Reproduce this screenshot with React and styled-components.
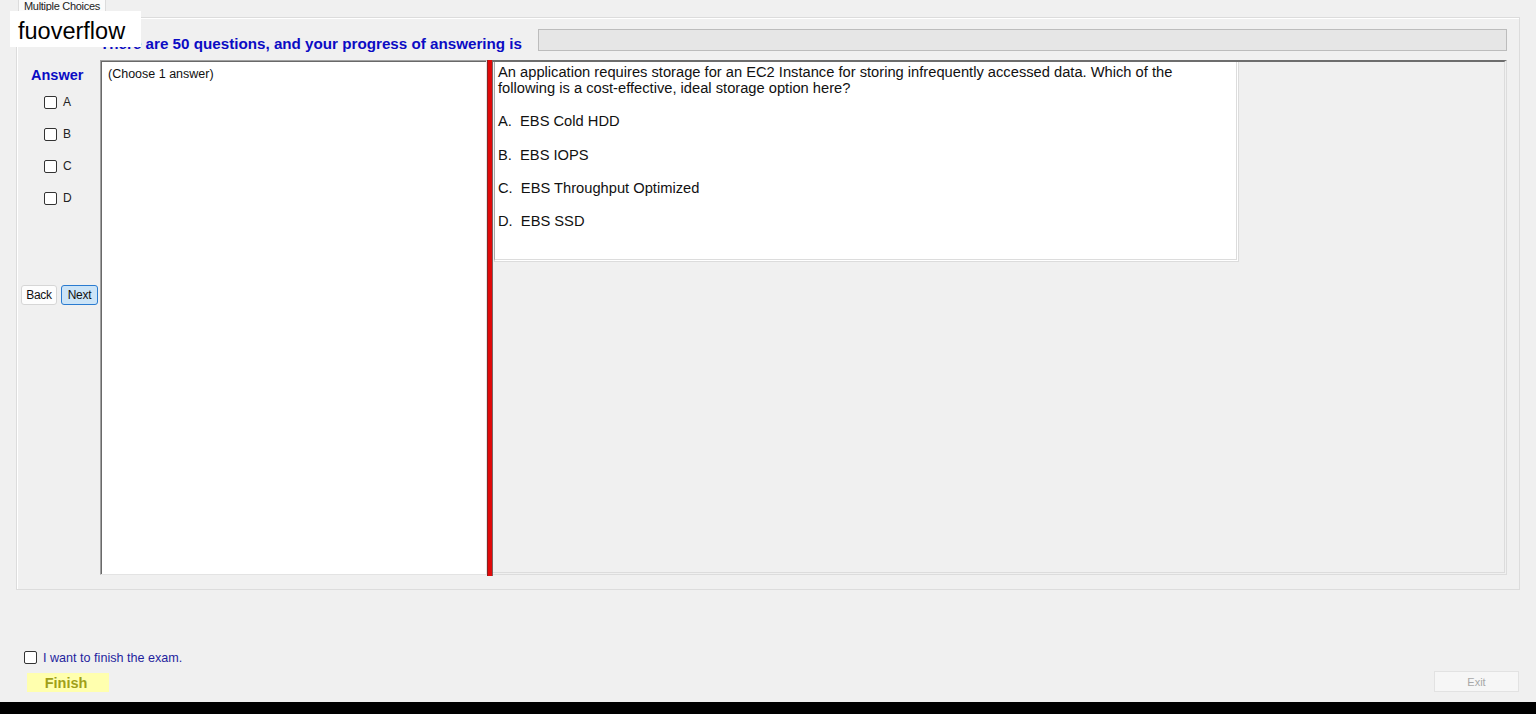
import React from "react";
import styled, { createGlobalStyle } from "styled-components";

const Global = createGlobalStyle`
  html, body { margin: 0; padding: 0; background: #f0f0f0; overflow: hidden; }
  body { font-family: "Liberation Sans", Arial, sans-serif; }
  * { box-sizing: border-box; }
`;

const Root = styled.div`
  position: relative;
  width: 1536px;
  height: 714px;
  display: flex;
  flex-direction: column;
  background: #f0f0f0;
`;

const Watermark = styled.div`
  position: absolute;
  left: 10px;
  top: 11px;
  width: 131px;
  height: 36px;
  background: #ffffff;
  color: #000;
  font-size: 23.5px;
  line-height: 30px;
  padding: 5px 0 0 8px;
  z-index: 5;
`;

const TabStrip = styled.div`
  height: 17px;
  padding-left: 18px;
  display: flex;
  align-items: flex-start;
  position: relative;
  z-index: 2;
`;

const Tab = styled.div`
  height: 18px;
  padding: 0 5px;
  background: #fbfbfb;
  border: 1px solid #dcdcdc;
  border-top: none;
  border-bottom: none;
  font-size: 11px;
  line-height: 14px;
  color: #222;
  overflow: hidden;
  margin-top: -1px;
  letter-spacing: -0.3px;
`;

const TabPage = styled.div`
  margin: 0 16px;
  height: 573px;
  border: 1px solid #dcdcdc;
  background: #f0f0f0;
  box-shadow: inset 1px 1px 0 #fff;
  display: flex;
  flex-direction: column;
`;

const HeaderRow = styled.div`
  height: 42px;
  display: flex;
  align-items: flex-start;
  padding: 11px 12px 0 83px;
`;

const Title = styled.div`
  color: #0b0bc4;
  font-weight: bold;
  font-size: 15.2px;
  line-height: 18px;
  margin-top: 6px;
  white-space: nowrap;
`;

const ProgressBar = styled.div`
  margin-left: auto;
  width: 969px;
  height: 22px;
  background: #e6e6e6;
  border: 1px solid #bcbcbc;
`;

const MainRow = styled.div`
  height: 515px;
  display: flex;
  padding-right: 12px;
`;

const Sidebar = styled.div`
  width: 83px;
  display: flex;
  flex-direction: column;
  padding-top: 7px;
`;

const AnswerLabel = styled.div`
  color: #0b0bc4;
  font-weight: bold;
  font-size: 14.5px;
  line-height: 16px;
  padding-left: 14px;
  margin-bottom: 13px;
`;

const CheckList = styled.div`
  display: flex;
  flex-direction: column;
  gap: 19px;
  padding-left: 27px;
`;

const CheckRow = styled.label`
  display: flex;
  align-items: center;
  gap: ${(p) => p.$gap || 6}px;
  font-size: ${(p) => p.$size || 12}px;
  line-height: 13px;
  color: ${(p) => p.$color || "#222"};
`;

const CheckText = styled.span`
  padding-top: ${(p) => p.$drop || 0}px;
`;

const Box = styled.span`
  width: 13px;
  height: 13px;
  border: 1px solid #333;
  border-radius: 2px;
  background: #fff;
  flex: none;
`;

const ButtonRow = styled.div`
  display: flex;
  gap: 4px;
  padding-left: 4px;
  margin-top: 80px;
`;

const SmallButton = styled.button`
  height: 20px;
  padding: 0;
  width: ${(p) => p.$w}px;
  font-family: "Liberation Sans", Arial, sans-serif;
  font-size: 12px;
  letter-spacing: -0.3px;
  color: #111;
  border-radius: 3px;
  border: 1px solid ${(p) => (p.$active ? "#2a7bd0" : "#d6d6d6")};
  background: ${(p) => (p.$active ? "#cce4f7" : "#fdfdfd")};
`;

const ChoicePanel = styled.div`
  width: 387px;
  background: #fff;
  border-top: 1px solid #a0a0a0;
  border-left: 1px solid #a0a0a0;
  border-right: 1px solid #e3e3e3;
  border-bottom: 1px solid #e3e3e3;
  box-shadow: inset 1px 1px 0 #696969;
  padding: 6px 7px;
  font-size: 12.5px;
  line-height: 14px;
  color: #111;
`;

const Splitter = styled.div`
  width: 6px;
  background: #e00a0a;
  border-left: 1px solid #8a2020;
  border-right: 1px solid #7a6060;
  height: 516px;
`;

const QuestionArea = styled.div`
  flex: 1;
  border-top: 2px solid #6d6d6d;
  border-right: 3px double #dcdcdc;
  border-bottom: 3px double #dcdcdc;
  background: #f0f0f0;
  padding-left: 1px;
`;

const QuestionBox = styled.div`
  width: 745px;
  height: 200px;
  background: #fff;
  border-right: 3px double #dcdcdc;
  border-bottom: 3px double #dcdcdc;
  border-left: 1px solid #a8a8a8;
  padding: 2px 3px;
  font-size: 14.7px;
  line-height: 16px;
  color: #111;
`;

const Option = styled.div`
  white-space: pre;
  margin-top: ${(p) => p.$mt}px;
`;

const Bottom = styled.div`
  flex: 1;
  display: flex;
  align-items: flex-end;
  justify-content: space-between;
  padding: 0 17px 10px 24px;
`;

const FinishGroup = styled.div`
  display: flex;
  flex-direction: column;
  gap: 8px;
`;

const FinishButton = styled.button`
  margin-left: 3px;
  width: 82px;
  height: 19px;
  border: none;
  background: #ffffae;
  color: #a0a018;
  font-family: "Liberation Sans", Arial, sans-serif;
  font-weight: bold;
  font-size: 14.5px;
  padding: 0 4px 0 0;
`;

const ExitButton = styled.button`
  width: 85px;
  height: 21px;
  background: #f6f6f6;
  border: 1px solid #e2e2e2;
  color: #a8a8a8;
  font-family: "Liberation Sans", Arial, sans-serif;
  font-size: 11px;
  padding: 0;
`;

const Taskbar = styled.div`
  height: 12px;
  background: #000;
  flex: none;
`;

export default function App() {
  const letters = ["A", "B", "C", "D"];
  return (
    <Root>
      <Global />
      <Watermark>fuoverflow</Watermark>
      <TabStrip>
        <Tab>Multiple Choices</Tab>
      </TabStrip>
      <TabPage>
        <HeaderRow>
          <Title>There are 50 questions, and your progress of answering is</Title>
          <ProgressBar />
        </HeaderRow>
        <MainRow>
          <Sidebar>
            <AnswerLabel>Answer</AnswerLabel>
            <CheckList>
              {letters.map((l) => (
                <CheckRow key={l}>
                  <Box />
                  <CheckText>{l}</CheckText>
                </CheckRow>
              ))}
            </CheckList>
            <ButtonRow>
              <SmallButton $w={36}>Back</SmallButton>
              <SmallButton $w={37} $active>
                Next
              </SmallButton>
            </ButtonRow>
          </Sidebar>
          <ChoicePanel>(Choose 1 answer)</ChoicePanel>
          <Splitter />
          <QuestionArea>
            <QuestionBox>
              An application requires storage for an EC2 Instance for storing infrequently accessed data. Which of the
              <br />
              following is a cost-effective, ideal storage option here?
              <Option $mt={17}>{"A.  EBS Cold HDD"}</Option>
              <Option $mt={18}>{"B.  EBS IOPS"}</Option>
              <Option $mt={17}>{"C.  EBS Throughput Optimized"}</Option>
              <Option $mt={17}>{"D.  EBS SSD"}</Option>
            </QuestionBox>
          </QuestionArea>
        </MainRow>
      </TabPage>
      <Bottom>
        <FinishGroup>
          <CheckRow $gap={6} $size={12.6} $color="#1f1f9e">
            <Box />
            <CheckText $drop={3}>I want to finish the exam.</CheckText>
          </CheckRow>
          <FinishButton>Finish</FinishButton>
        </FinishGroup>
        <ExitButton>Exit</ExitButton>
      </Bottom>
      <Taskbar />
    </Root>
  );
}
